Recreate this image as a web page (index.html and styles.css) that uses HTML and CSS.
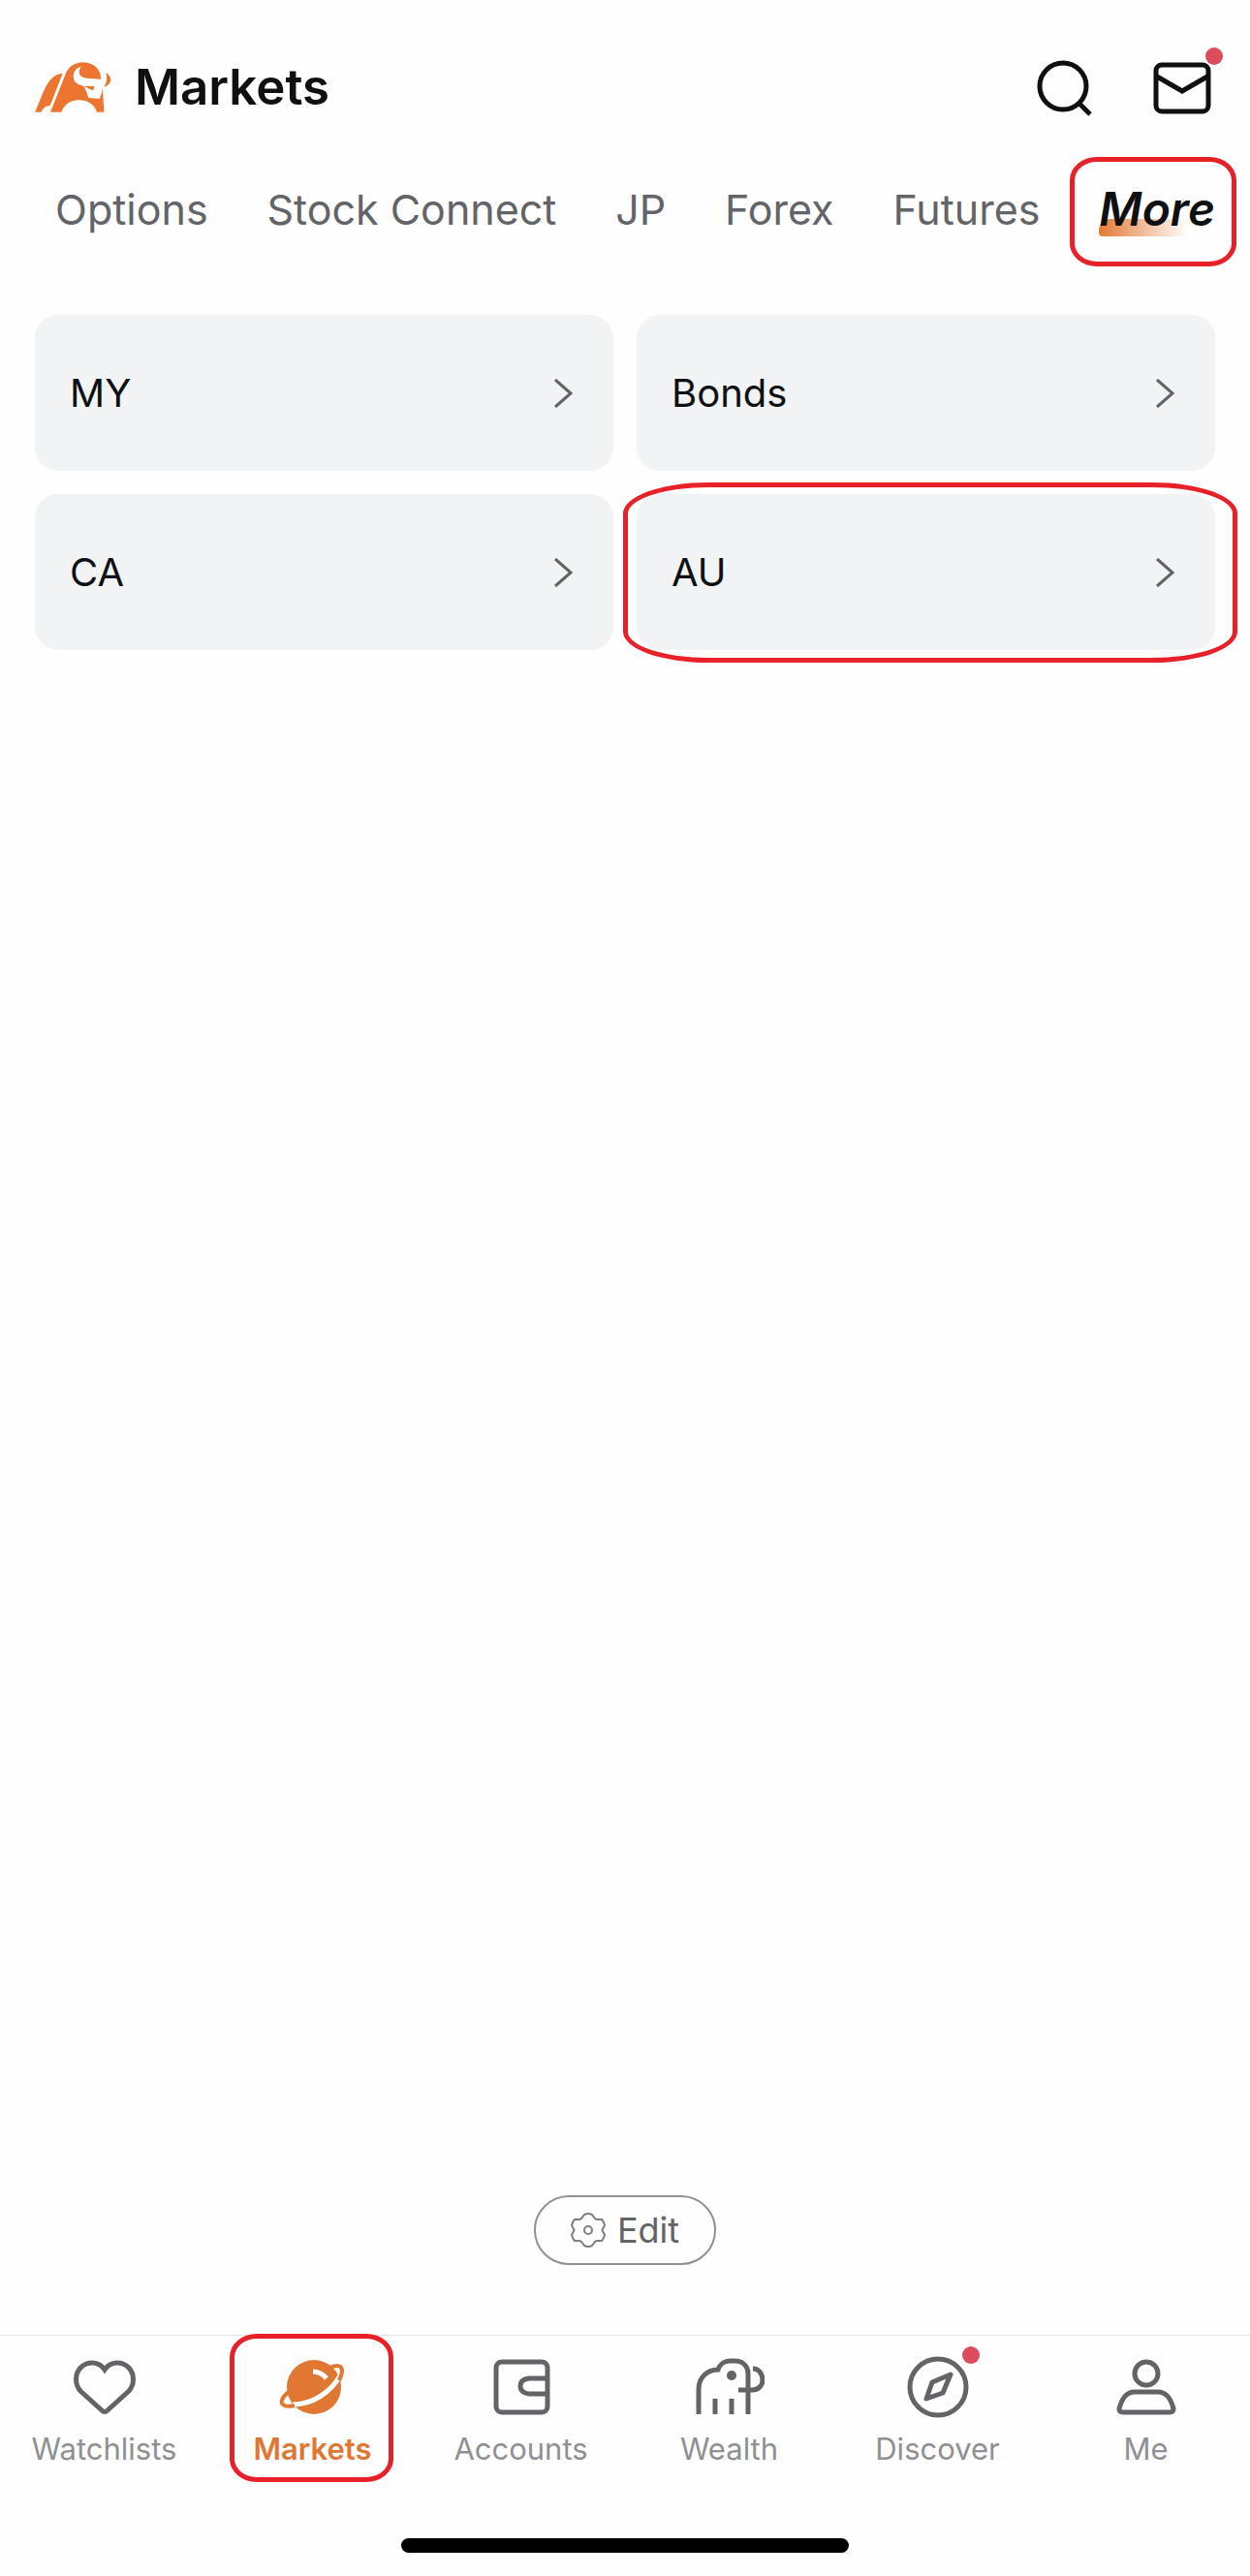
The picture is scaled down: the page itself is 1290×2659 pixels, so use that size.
FILE: index.html
```html
<!DOCTYPE html>
<html lang="en">

<head>
    <meta charset="UTF-8">
    <meta name="viewport" content="width=device-width, initial-scale=1.0">
    <title>Markets</title>
    <link rel="stylesheet" href="styles.css">
</head>

<body>
    <header class="header">
        <svg class="logo" viewBox="108 103 240 156" aria-hidden="true">
            <path fill="#ec752f" d="M108 258C122 232 130 196 150 166C162 148 178 139 194 138L155 238C143 239 134 244 128 256L126 258Z"/>
            <path fill="#ec752f" d="M156 258L200 148C208 118 232 104 258 104C290 105 312 126 312 152L318 190L322 258H300C292 234 272 221 244 221C216 221 199 236 190 258Z"/>
            <path fill="#fff" d="M251 118C224 123 221 158 238 169C244 174 252 176 260 178L268 197L274 214L308 217L315 198L318 182C334 160 334 145 325 131C328 146 323 154 312 156L268 153C248 150 238 138 251 118Z"/>
            <path fill="#ec752f" d="M260 177L292 178L289 191L276 186Z"/>
            <path fill="#ec752f" d="M328 137C340 143 347 157 341 166C337 173 330 178 322 180C331 166 333 152 328 137Z"/>
        </svg>
        <h1 class="title">Markets</h1>
        <div class="actions">
            <button class="icon-button" type="button" aria-label="Search">
                <svg viewBox="0 0 60 60" aria-hidden="true">
                    <circle cx="27" cy="29" r="24"/>
                    <path d="M43 46L55 58"/>
                </svg>
            </button>
            <button class="icon-button" type="button" aria-label="Messages">
                <svg viewBox="0 0 60 60" aria-hidden="true">
                    <rect x="3" y="7" width="54" height="48" rx="6"/>
                    <path d="M4 19L30 34L56 19"/>
                </svg>
                <span class="dot"></span>
            </button>
        </div>
    </header>

    <nav class="tabs" aria-label="Market categories">
        <a href="#options">Options</a>
        <a href="#stock-connect">Stock Connect</a>
        <a href="#jp">JP</a>
        <a href="#forex">Forex</a>
        <a href="#futures">Futures</a>
        <a class="active marked" href="#more" aria-current="page">More</a>
    </nav>

    <main class="content">
        <div class="cards">
            <a class="card" href="#my">MY
                <svg class="chevron" viewBox="0 0 22 34" aria-hidden="true"><path d="M3 3L19 17L3 31"/></svg>
            </a>
            <a class="card" href="#bonds">Bonds
                <svg class="chevron" viewBox="0 0 22 34" aria-hidden="true"><path d="M3 3L19 17L3 31"/></svg>
            </a>
            <a class="card" href="#ca">CA
                <svg class="chevron" viewBox="0 0 22 34" aria-hidden="true"><path d="M3 3L19 17L3 31"/></svg>
            </a>
            <a class="card marked" href="#au">AU
                <svg class="chevron" viewBox="0 0 22 34" aria-hidden="true"><path d="M3 3L19 17L3 31"/></svg>
            </a>
        </div>

        <button class="edit" type="button">
            <svg viewBox="0 0 36 38" aria-hidden="true">
                <path d="M14 3Q18 1 22 3L25 7Q26 8 28 8L32 8Q34 10 35 14L33 18Q32 19 33 20L35 24Q34 28 32 30L28 30Q26 30 25 31L22 35Q18 37 14 35L11 31Q10 30 8 30L4 30Q2 28 1 24L3 20Q4 19 3 18L1 14Q2 10 4 8L8 8Q10 8 11 7Z"/>
                <circle cx="18" cy="19" r="4"/>
            </svg>
            Edit
        </button>
    </main>

    <nav class="tabbar" aria-label="Main">
        <a href="#watchlists">
            <svg viewBox="0 0 72 72" aria-hidden="true">
                <path d="M36 18C30 9 18 9 11 16C5 23 5 33 11 40L33 60Q36 63 39 60L61 40C67 33 67 23 61 16C54 9 42 9 36 18Z"/>
            </svg>
            Watchlists
        </a>
        <a class="active marked" href="#markets" aria-current="page">
            <svg class="planet" viewBox="0 0 72 72" aria-hidden="true">
                <circle class="fill" cx="37" cy="36" r="28"/>
                <path class="gap" d="M15 54C35 54 54 42 64 24"/>
                <path class="ring" d="M11 41C4 46 2 52 5 54Q8 57 17 55M53 16C60 13 66 13 66 19Q66 23 63 29"/>
                <path class="gap" d="M36 20Q44 20 50 27"/>
            </svg>
            Markets
        </a>
        <a href="#accounts">
            <svg viewBox="0 0 72 72" aria-hidden="true">
                <rect x="10" y="10" width="53" height="52" rx="6"/>
                <path d="M63 27H44Q35 28 35 35Q35 42 44 43H63"/>
            </svg>
            Accounts
        </a>
        <a href="#wealth">
            <svg viewBox="0 0 72 72" aria-hidden="true">
                <path d="M4 64V38C4 26 13 18 24 18C26 12 31 9 36 9H42C50 9 55 15 55 22V64M21 48V64M38 48V64M45 39H59C66 39 70 34 70 29C70 22 66 17 60 17"/>
                <circle class="eye" cx="38" cy="24" r="5"/>
            </svg>
            Wealth
        </a>
        <a href="#discover">
            <svg viewBox="0 0 72 72" aria-hidden="true">
                <circle cx="36" cy="36" r="29"/>
                <path stroke-linejoin="round" d="M49 23L30 31L24 48L41 42Z"/>
            </svg>
            <span class="dot"></span>
            Discover
        </a>
        <a href="#me">
            <svg viewBox="0 0 72 72" aria-hidden="true">
                <circle cx="36" cy="22" r="12"/>
                <path d="M24 41H48C57 41 61 48 64 58Q64 62 60 62H12Q8 62 8 58C11 48 15 41 24 41Z"/>
            </svg>
            Me
        </a>
    </nav>
    <div class="home-indicator"></div>
</body>

</html>
```

FILE: styles.css
```css
* {
    box-sizing: border-box;
}

body {
    display: flex;
    flex-direction: column;
    min-height: 100vh;
    margin: 0;
    background-color: #fefefe;
    color: #0e1012;
    font-family: Inter, sans-serif;
}

a {
    color: inherit;
    text-decoration: none;
}

button {
    padding: 0;
    border: none;
    background: none;
    font-family: inherit;
    cursor: pointer;
}

svg {
    display: block;
    flex: none;
    fill: none;
    stroke: currentColor;
    stroke-width: 4;
}

/* Red outline around the highlighted items */
.marked {
    position: relative;
}

.marked::after {
    content: "";
    position: absolute;
    border: 5px solid #e82027;
    border-radius: 28px / 24px;
    pointer-events: none;
}

.dot {
    position: absolute;
    width: 18px;
    height: 18px;
    border-radius: 50%;
    background-color: #dc4c5c;
}

.header {
    display: flex;
    align-items: center;
    padding: 60px 40px 0 36px;
}

.logo {
    width: 80px;
    height: 52px;
    stroke: none;
}

.title {
    margin: 0 0 0 23px;
    font-size: 51px;
    line-height: 60px;
    font-weight: 600;
}

.actions {
    display: flex;
    gap: 60px;
    margin-left: auto;
}

.icon-button {
    position: relative;
    color: #0e1012;
}

.icon-button svg {
    width: 60px;
    height: 60px;
    stroke-width: 5;
}

.icon-button .dot {
    top: -11px;
    right: -12px;
}

.tabs {
    display: flex;
    justify-content: space-between;
    align-items: center;
    padding: 66px 36px 0 57px;
    color: #626467;
    font-size: 43px;
    line-height: 60px;
}

.tabs .active {
    color: #0e1012;
    font-size: 48px;
    font-style: italic;
    font-weight: 600;
}

.tabs .active::before {
    content: "";
    position: absolute;
    z-index: -1;
    left: 0;
    bottom: 2px;
    width: 92px;
    height: 18px;
    border-radius: 12px 0 0 4px;
    background: linear-gradient(to right, #e47a35, #fefefe);
}

.tabs .marked::after {
    inset: -24px -22px -29px -30px;
}

.content {
    display: flex;
    flex: 1;
    flex-direction: column;
    justify-content: space-between;
    align-items: center;
    padding: 79px 36px 72px;
}

.cards {
    display: grid;
    grid-template-columns: 1fr 1fr;
    gap: 24px;
    width: 100%;
}

.card {
    display: flex;
    justify-content: space-between;
    align-items: center;
    padding: 57px 41px 56px 36px;
    border-radius: 24px;
    background-color: #f1f3f5;
    font-size: 40px;
    line-height: 48px;
}

.card.marked::after {
    inset: -12px -23px -13px -14px;
    border-radius: 88px / 32px;
}

.chevron {
    width: 22px;
    height: 34px;
    color: #626467;
    stroke-width: 3;
}

.edit {
    display: flex;
    align-items: center;
    gap: 12px;
    padding: 10px 36px;
    border: 2px solid #8e9093;
    border-radius: 36px;
    color: #626467;
    font-size: 36px;
    line-height: 48px;
}

.edit svg {
    width: 36px;
    height: 38px;
    color: #7c7e81;
    stroke-width: 2;
}

.tabbar {
    display: grid;
    grid-template-columns: repeat(6, 1fr);
    border-top: 1px solid #e6e6e7;
    color: #8e9093;
    font-size: 31px;
    line-height: 40px;
}

.tabbar a {
    display: flex;
    position: relative;
    flex-direction: column;
    align-items: center;
    gap: 8px;
    padding: 17px 0 12px;
}

.tabbar svg {
    width: 72px;
    height: 72px;
    color: #626467;
    stroke-width: 5;
}

.tabbar .active {
    color: #e07834;
    font-weight: 600;
}

.tabbar .planet {
    color: #e07834;
}

.planet .fill {
    fill: currentColor;
    stroke: none;
}

.planet .ring {
    stroke-width: 4;
}

.planet .gap {
    stroke: #fefefe;
}

.eye {
    fill: currentColor;
    stroke: none;
}

.tabbar .dot {
    top: 11px;
    left: calc(50% + 25px);
}

.tabbar .marked::after {
    inset: -2px 24px -2px 22px;
}

.home-indicator {
    width: 462px;
    max-width: 60%;
    height: 15px;
    margin: 60px auto 24px;
    border-radius: 8px;
    background-color: #000;
}
```
